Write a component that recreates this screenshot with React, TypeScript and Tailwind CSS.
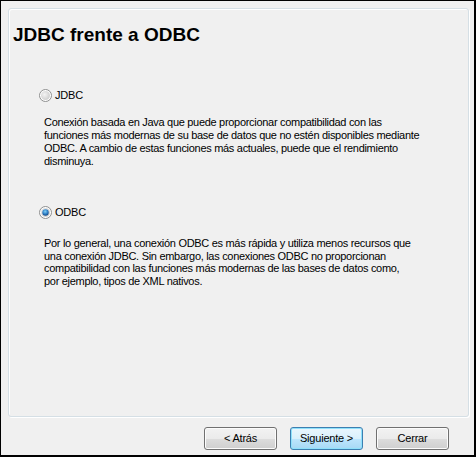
import React from "react";

const sys = { fontFamily: '"Liberation Sans", Arial, sans-serif' };

function Radio({ checked }: { checked?: boolean }) {
  return (
    <svg width="13" height="13" viewBox="0 0 13 13" className="shrink-0">
      <defs>
        <radialGradient id={checked ? "rc" : "ru"} cx="0.4" cy="0.4" r="0.7">
          <stop offset="0" stopColor="#f4f4f4" />
          <stop offset="1" stopColor="#c9c9c9" />
        </radialGradient>
        <radialGradient id="dot" cx="0.45" cy="0.35" r="0.7">
          <stop offset="0" stopColor="#7fd0f7" />
          <stop offset="0.6" stopColor="#2a78c0" />
          <stop offset="1" stopColor="#0f3f78" />
        </radialGradient>
      </defs>
      <circle cx="6.5" cy="6.5" r="6" fill="#ffffff" stroke="#8e8f8f" strokeWidth="1" />
      <circle cx="6.5" cy="6.5" r="4.5" fill={`url(#${checked ? "rc" : "ru"})`} />
      {checked && <circle cx="6.5" cy="6.5" r="3.2" fill="url(#dot)" />}
    </svg>
  );
}

function Btn({ label, def }: { label: string; def?: boolean }) {
  return (
    <div
      className={
        "w-[73px] h-[23px] rounded-[3px] border flex items-center justify-center text-[11px] tracking-[-0.2px] text-black " +
        (def
          ? "border-[#3c7fb1] shadow-[inset_0_0_0_1px_#8fe1fb] bg-[linear-gradient(#eaf6fd_0%,#d9f0fc_50%,#bee6fd_50%,#a7d9f5_100%)]"
          : "border-[#707070] shadow-[inset_0_0_0_1px_#fcfcfc] bg-[linear-gradient(#f2f2f2_0%,#ebebeb_50%,#dddddd_50%,#cfcfcf_100%)]")
      }
      style={sys}
    >
      {label}
    </div>
  );
}

export default function App() {
  return (
    <div
      className="w-[476px] h-[457px] box-border bg-[#f0f0f0] border-l border-t border-r-2 border-b-2 border-black flex flex-col"
      style={sys}
    >
      <div className="ml-[7px] mt-[7px] w-[461px] h-[409px] box-border border border-[#d5dfe5] rounded-[3px] shadow-[inset_1px_1px_0_#ffffff,1px_1px_0_#ffffff] flex flex-col">
        <div className="mt-[15px] ml-[4px] h-[22px] leading-[22px] text-[19px] font-bold text-black">
          JDBC frente a ODBC
        </div>
        <div className="mt-[43px] ml-[30px] h-[13px] flex items-center gap-[3px] text-[11px] tracking-[-0.2px] text-black">
          <Radio />
          <span>JDBC</span>
        </div>
        <div className="mt-[14px] ml-[35px] text-[11px] leading-[13px] tracking-[-0.3px] text-black whitespace-nowrap">
          Conexión basada en Java que puede proporcionar compatibilidad con las
          <br />
          funciones más modernas de su base de datos que no estén disponibles mediante
          <br />
          ODBC. A cambio de estas funciones más actuales, puede que el rendimiento
          <br />
          disminuya.
        </div>
        <div className="mt-[38px] ml-[30px] h-[13px] flex items-center gap-[3px] text-[11px] tracking-[-0.2px] text-black">
          <Radio checked />
          <span>ODBC</span>
        </div>
        <div className="mt-[18px] ml-[35px] text-[11px] leading-[12.7px] tracking-[-0.3px] text-black whitespace-nowrap">
          Por lo general, una conexión ODBC es más rápida y utiliza menos recursos que
          <br />
          una conexión JDBC. Sin embargo, las conexiones ODBC no proporcionan
          <br />
          compatibilidad con las funciones más modernas de las bases de datos como,
          <br />
          por ejemplo, tipos de XML nativos.
        </div>
      </div>
      <div className="mt-[10px] flex gap-[13px] pl-[203px]">
        <Btn label="< Atrás" />
        <Btn label="Siguiente >" def />
        <Btn label="Cerrar" />
      </div>
    </div>
  );
}
